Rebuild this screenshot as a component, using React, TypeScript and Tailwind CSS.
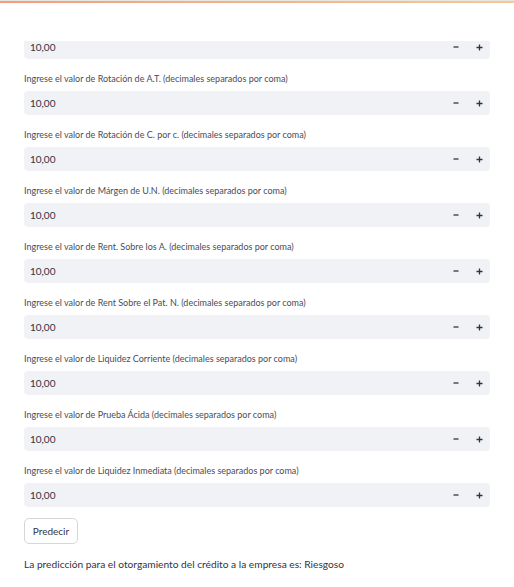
import React from 'react';

const labels = [
  'Rotación de A.T.',
  'Rotación de C. por c.',
  'Márgen de U.N.',
  'Rent. Sobre los A.',
  'Rent Sobre el Pat. N.',
  'Liquidez Corriente',
  'Prueba Ácida',
  'Liquidez Inmediata',
];

const font = { fontFamily: 'Lato, "Open Sans", sans-serif' };

const NumberBox: React.FC = () => (
  <div className="flex h-[24px] shrink-0 items-center rounded-[4px] bg-[#f0f2f6] text-[#31333f]">
    <span className="flex-1 pl-[6px] text-[10px]">10,00</span>
    <button className="flex h-full w-[24px] items-center justify-center">
      <svg width="6" height="6" viewBox="0 0 6 6">
        <path d="M0.5 3h5" stroke="#31333f" strokeWidth="1.3" />
      </svg>
    </button>
    <button className="flex h-full w-[22px] items-center justify-center">
      <svg width="7" height="7" viewBox="0 0 7 7">
        <path d="M0.5 3.5h6M3.5 0.5v6" stroke="#31333f" strokeWidth="1.3" />
      </svg>
    </button>
  </div>
);

const App: React.FC = () => {
  return (
    <div className="min-h-[587px] w-[514px] bg-white" style={font}>
      <header className="h-[41px] bg-white">
        <div className="h-[1px] bg-[#e6e6e6]" />
        <div className="h-[2px] bg-gradient-to-r from-[#f59c7b] to-[#f6c894]" />
      </header>
      <main className="px-[24px]">
        {/* first field is scrolled under the header */}
        <div className="flex h-[18px] flex-col justify-end overflow-hidden">
          <NumberBox />
        </div>
        {labels.map((l) => (
          <div key={l} className="mt-[12px]">
            <label className="block h-[16px] text-[9px] leading-[16px] text-[#4a4c57]">
              Ingrese el valor de {l} (decimales separados por coma)
            </label>
            <div className="mt-[4px]">
              <NumberBox />
            </div>
          </div>
        ))}
        <button className="mt-[11px] h-[26px] w-[54px] rounded-[5px] border border-[#d5d6d9] bg-white text-[10px] text-[#31333f]">
          Predecir
        </button>
        <p className="mt-[13px] text-[10.2px] text-[#31333f]">
          La predicción para el otorgamiento del crédito a la empresa es: Riesgoso
        </p>
      </main>
    </div>
  );
};

export default App;
